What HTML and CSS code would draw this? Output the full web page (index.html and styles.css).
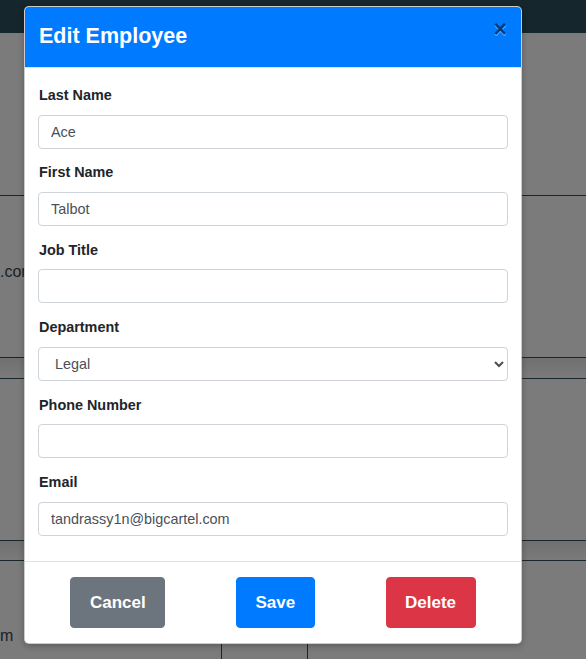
FILE: index.html
```html
<!DOCTYPE html>
<html lang="en">
<head>
<meta charset="utf-8">
<title>Edit Employee</title>
<link rel="stylesheet" href="styles.css">
</head>
<body>
<div class="page">
  <div class="nav"></div>
  <div class="row r1"></div>
  <div class="row r2"><span class="bg-text">.com</span></div>
  <div class="band"></div>
  <div class="row r3"></div>
  <div class="band b2"></div>
  <div class="row r4">
    <div class="cell c1"><span class="bg-text">m</span></div>
    <div class="cell c2"></div>
    <div class="cell c3"></div>
  </div>
</div>

<div class="modal">
  <div class="modal-header">
    <h5 class="modal-title">Edit Employee</h5>
    <button class="close" type="button">&times;</button>
  </div>
  <div class="modal-body">
    <div class="group"><label>Last Name</label><input class="control" type="text" value="Ace"></div>
    <div class="group"><label>First Name</label><input class="control" type="text" value="Talbot"></div>
    <div class="group"><label>Job Title</label><input class="control" type="text" value=""></div>
    <div class="group"><label>Department</label><select class="control"><option>Legal</option></select></div>
    <div class="group"><label>Phone Number</label><input class="control" type="text" value=""></div>
    <div class="group"><label>Email</label><input class="control" type="text" value="tandrassy1n@bigcartel.com"></div>
  </div>
  <div class="modal-footer">
    <button class="btn btn-secondary" type="button">Cancel</button>
    <button class="btn btn-primary" type="button">Save</button>
    <button class="btn btn-danger" type="button">Delete</button>
  </div>
</div>
</body>
</html>
```
FILE: styles.css
```css
* { box-sizing: border-box; }
html, body { margin: 0; padding: 0; }
body {
  background: #7b7b7b;
  font-family: "Liberation Sans", Arial, sans-serif;
  height: 659px;
  overflow: hidden;
}
.page { display: flex; flex-direction: column; height: 659px; }
.nav { height: 33px; background: #15262c; flex: none; }
.row { border-bottom: 1px solid #18272d; flex: none; }
.r1 { height: 163px; }
.r2 { height: 162px; display: flex; align-items: center; padding-bottom: 10px; }
.r3 { height: 162px; }
.band { height: 21px; flex: none; border-bottom: 1px solid #18272d; background: linear-gradient(#707070, #7a7a7a); }
.b2 { height: 20px; }
.r4 { flex: 1; border-bottom: 0; display: flex; }
.cell { height: 100%; }
.c1 { width: 222px; border-right: 1px solid #18272d; padding-top: 64px; }
.c2 { width: 86px; border-right: 1px solid #18272d; background: linear-gradient(#727272, #7b7b7b 40px); }
.c3 { flex: 1; }
.bg-text { font-size: 16px; line-height: 22px; color: #1b1d1f; display: block; }

.modal {
  position: absolute;
  left: 24px;
  top: 6px;
  width: 498px;
  background: #fff;
  border: 1px solid rgba(0,0,0,.2);
  border-radius: 5px;
  box-shadow: 0 2px 6px rgba(0,0,0,.25);
  overflow: hidden;
}
.modal-header {
  height: 61px;
  background: #007bff;
  border-bottom: 1px solid #dee2e6;
  display: flex;
  align-items: center;
  padding: 0 14px 0 14px;
}
.modal-title {
  flex: 1;
  margin: 0;
  color: #fff;
  font-size: 21.5px;
  font-weight: 700;
  line-height: 1.2;
}
.close {
  align-self: flex-start;
  margin-top: 11px;
  background: none;
  border: 0;
  padding: 0;
  font-family: "Liberation Sans", Arial, sans-serif;
  font-size: 23px;
  font-weight: 700;
  line-height: 1;
  color: #000;
  opacity: .5;
  text-shadow: 0 1px 0 #fff;
}
.modal-body {
  padding: 17px 13px 25px;
  display: flex;
  flex-direction: column;
  gap: 13.8px;
}
.group { display: flex; flex-direction: column; }
label {
  font-size: 14.4px;
  font-weight: 700;
  line-height: 21.6px;
  color: #212529;
  margin-bottom: 8px;
  padding-left: 1px;
}
.control {
  height: 34px;
  width: 100%;
  border: 1px solid #ced4da;
  border-radius: 4px;
  padding: 0 12px;
  font-family: "Liberation Sans", Arial, sans-serif;
  font-size: 14.4px;
  color: #495057;
  background: #fff;
  outline: none;
}
.modal-footer {
  border-top: 1px solid #dee2e6;
  padding: 11px 10px;
  display: flex;
  justify-content: space-around;
  align-items: center;
}
.btn {
  margin: 4px;
  border: 1px solid transparent;
  border-radius: 4px;
  padding: 12px 18.5px;
  font-family: "Liberation Sans", Arial, sans-serif;
  font-size: 17px;
  font-weight: 700;
  line-height: 25px;
  color: #fff;
}
.btn-secondary { background: #6c757d; border-color: #6c757d; }
.btn-primary { background: #007bff; border-color: #007bff; }
.btn-danger { background: #dc3545; border-color: #dc3545; }
```
